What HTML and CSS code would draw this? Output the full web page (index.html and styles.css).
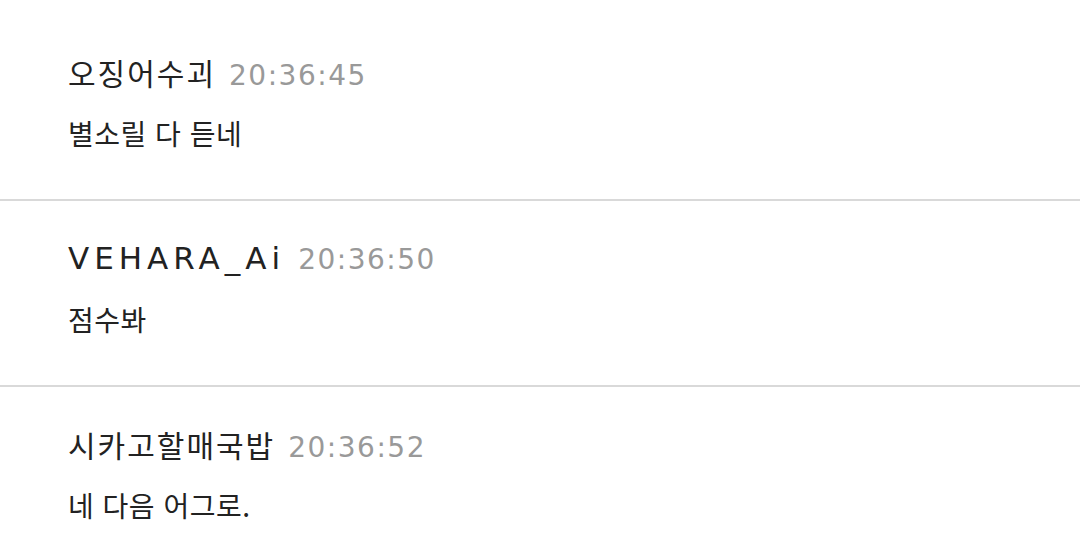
FILE: index.html
```html
<!DOCTYPE html>
<html lang="ko">
<head>
    <meta charset="UTF-8">
    <title>채팅</title>
    <link rel="stylesheet" href="styles.css">
</head>
<body>

<ul class="chat-list">
    <li class="chat-item">
        <div class="chat-head">
            <span class="nick">오징어수괴</span>
            <span class="time">20:36:45</span>
        </div>
        <div class="chat-text">별소릴 다 듣네</div>
    </li>
    <li class="chat-item">
        <div class="chat-head">
            <span class="nick latin">VEHARA_Ai</span>
            <span class="time">20:36:50</span>
        </div>
        <div class="chat-text">점수봐</div>
    </li>
    <li class="chat-item">
        <div class="chat-head">
            <span class="nick">시카고할매국밥</span>
            <span class="time">20:36:52</span>
        </div>
        <div class="chat-text">네 다음 어그로.</div>
    </li>
</ul>

</body>
</html>
```

FILE: styles.css
```css
body {
    margin: 0;
    background-color: #fff;
    font-family: "Noto Sans CJK KR", "Noto Sans", sans-serif;
    color: #222;
}
.chat-list {
    list-style: none;
    margin: 0;
    padding: 15px 0 0 0;
}
.chat-item {
    height: 184px;
    box-sizing: content-box;
    padding: 0 68px;
    border-bottom: 2px solid #d9d9d9;
}
.chat-head {
    display: flex;
    align-items: baseline;
    gap: 13px;
    padding-top: 37px;
    height: 40px;
    line-height: 40px;
}
.nick {
    font-size: 30px;
    letter-spacing: 2px;
    color: #222;
}
.nick.latin {
    font-family: "DejaVu Sans", sans-serif;
    font-size: 31px;
    letter-spacing: 5px;
}
.time {
    font-family: "DejaVu Sans", sans-serif;
    font-size: 28px;
    letter-spacing: 1.5px;
    color: #999;
}
.chat-text {
    margin-top: 21px;
    height: 40px;
    line-height: 40px;
    font-size: 28px;
    letter-spacing: 0.5px;
}
```
